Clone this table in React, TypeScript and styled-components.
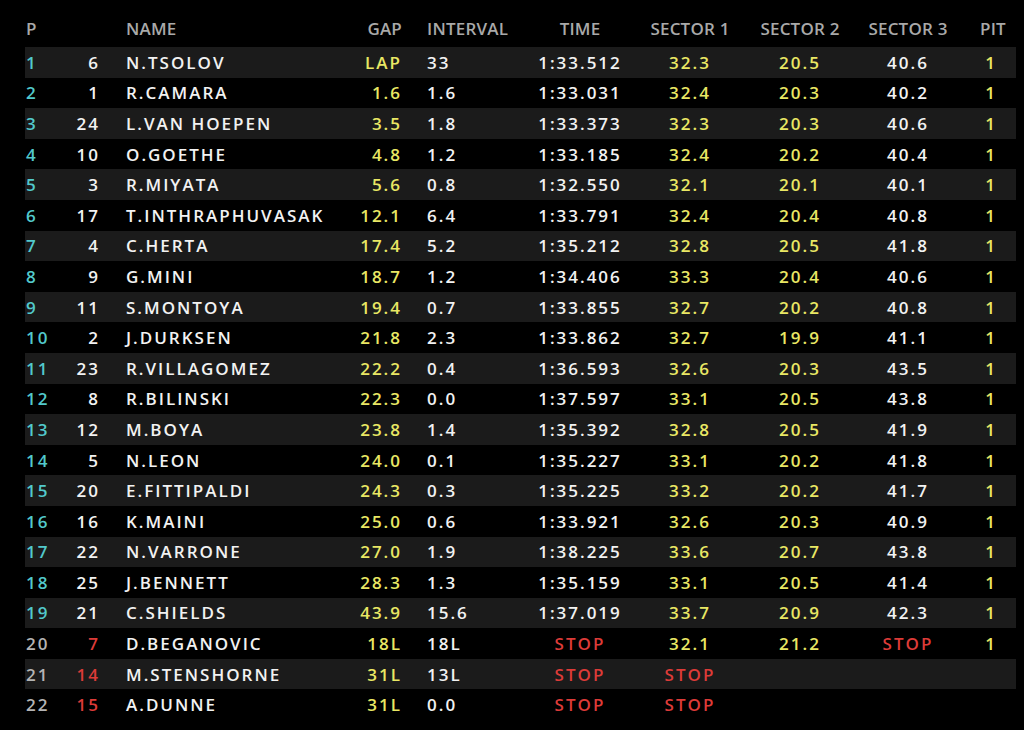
import React from "react";
import styled, { createGlobalStyle } from "styled-components";

const GlobalStyle = createGlobalStyle`
  html, body { margin: 0; padding: 0; background: #000; }
  body { font-family: "Open Sans", "Noto Sans", sans-serif; }
`;

const COLS = "40px 35px 240px 62px 118px 120px 100px 120px 96px 60px";

const Board = styled.div`
  width: 1024px;
  height: 730px;
  background: #000;
  padding: 13px 8px 0 25px;
  box-sizing: border-box;
  overflow: hidden;
`;

const HeaderRow = styled.div`
  display: grid;
  grid-template-columns: ${COLS};
  width: 991px;
  height: 31px;
  align-items: center;
  margin-bottom: 3px;
  color: #a9a9a9;
  font-size: 17px;
  font-weight: 600;
  letter-spacing: 0.2px;
`;

const Row = styled.div<{ $band: boolean }>`
  display: grid;
  grid-template-columns: ${COLS};
  width: 991px;
  height: 30.6px;
  align-items: center;
  background: ${(p) => (p.$band ? "#1b1b1b" : "#000")};
  font-size: 17px;
  font-weight: 600;
  letter-spacing: 2px;
  line-height: 1;
`;

type Align = "left" | "right" | "center";

const Cell = styled.div<{ $align: Align; $pl?: number; $color?: string }>`
  text-align: ${(p) => p.$align};
  padding-left: ${(p) => p.$pl ?? 0}px;
  color: ${(p) => p.$color ?? "#f2f2f2"};
  white-space: nowrap;
`;

const HCell = styled.div<{ $align: Align; $pl?: number }>`
  text-align: ${(p) => p.$align};
  padding-left: ${(p) => p.$pl ?? 0}px;
  white-space: nowrap;
`;

const CYAN = "#52c9cc";
const YELLOW = "#e9e764";
const RED = "#dd3b38";
const WHITE = "#f2f2f2";
const GRAY = "#b4b4b4";

type Driver = {
  no: string;
  name: string;
  gap: string;
  interval: string;
  time: string;
  s1: string;
  s2: string;
  s3: string;
  pit: string;
  out?: boolean;
};

const drivers: Driver[] = [
  { no: "6", name: "N.TSOLOV", gap: "LAP", interval: "33", time: "1:33.512", s1: "32.3", s2: "20.5", s3: "40.6", pit: "1" },
  { no: "1", name: "R.CAMARA", gap: "1.6", interval: "1.6", time: "1:33.031", s1: "32.4", s2: "20.3", s3: "40.2", pit: "1" },
  { no: "24", name: "L.VAN HOEPEN", gap: "3.5", interval: "1.8", time: "1:33.373", s1: "32.3", s2: "20.3", s3: "40.6", pit: "1" },
  { no: "10", name: "O.GOETHE", gap: "4.8", interval: "1.2", time: "1:33.185", s1: "32.4", s2: "20.2", s3: "40.4", pit: "1" },
  { no: "3", name: "R.MIYATA", gap: "5.6", interval: "0.8", time: "1:32.550", s1: "32.1", s2: "20.1", s3: "40.1", pit: "1" },
  { no: "17", name: "T.INTHRAPHUVASAK", gap: "12.1", interval: "6.4", time: "1:33.791", s1: "32.4", s2: "20.4", s3: "40.8", pit: "1" },
  { no: "4", name: "C.HERTA", gap: "17.4", interval: "5.2", time: "1:35.212", s1: "32.8", s2: "20.5", s3: "41.8", pit: "1" },
  { no: "9", name: "G.MINI", gap: "18.7", interval: "1.2", time: "1:34.406", s1: "33.3", s2: "20.4", s3: "40.6", pit: "1" },
  { no: "11", name: "S.MONTOYA", gap: "19.4", interval: "0.7", time: "1:33.855", s1: "32.7", s2: "20.2", s3: "40.8", pit: "1" },
  { no: "2", name: "J.DURKSEN", gap: "21.8", interval: "2.3", time: "1:33.862", s1: "32.7", s2: "19.9", s3: "41.1", pit: "1" },
  { no: "23", name: "R.VILLAGOMEZ", gap: "22.2", interval: "0.4", time: "1:36.593", s1: "32.6", s2: "20.3", s3: "43.5", pit: "1" },
  { no: "8", name: "R.BILINSKI", gap: "22.3", interval: "0.0", time: "1:37.597", s1: "33.1", s2: "20.5", s3: "43.8", pit: "1" },
  { no: "12", name: "M.BOYA", gap: "23.8", interval: "1.4", time: "1:35.392", s1: "32.8", s2: "20.5", s3: "41.9", pit: "1" },
  { no: "5", name: "N.LEON", gap: "24.0", interval: "0.1", time: "1:35.227", s1: "33.1", s2: "20.2", s3: "41.8", pit: "1" },
  { no: "20", name: "E.FITTIPALDI", gap: "24.3", interval: "0.3", time: "1:35.225", s1: "33.2", s2: "20.2", s3: "41.7", pit: "1" },
  { no: "16", name: "K.MAINI", gap: "25.0", interval: "0.6", time: "1:33.921", s1: "32.6", s2: "20.3", s3: "40.9", pit: "1" },
  { no: "22", name: "N.VARRONE", gap: "27.0", interval: "1.9", time: "1:38.225", s1: "33.6", s2: "20.7", s3: "43.8", pit: "1" },
  { no: "25", name: "J.BENNETT", gap: "28.3", interval: "1.3", time: "1:35.159", s1: "33.1", s2: "20.5", s3: "41.4", pit: "1" },
  { no: "21", name: "C.SHIELDS", gap: "43.9", interval: "15.6", time: "1:37.019", s1: "33.7", s2: "20.9", s3: "42.3", pit: "1" },
  { no: "7", name: "D.BEGANOVIC", gap: "18L", interval: "18L", time: "STOP", s1: "32.1", s2: "21.2", s3: "STOP", pit: "1", out: true },
  { no: "14", name: "M.STENSHORNE", gap: "31L", interval: "13L", time: "STOP", s1: "STOP", s2: "", s3: "", pit: "", out: true },
  { no: "15", name: "A.DUNNE", gap: "31L", interval: "0.0", time: "STOP", s1: "STOP", s2: "", s3: "", pit: "", out: true },
];

const tone = (v: string, base: string) => (v === "STOP" ? RED : base);

export default function App() {
  return (
    <>
      <GlobalStyle />
      <Board>
        <HeaderRow>
          <HCell $align="left" $pl={1}>P</HCell>
          <HCell $align="right" />
          <HCell $align="left" $pl={26}>NAME</HCell>
          <HCell $align="right">GAP</HCell>
          <HCell $align="left" $pl={25}>INTERVAL</HCell>
          <HCell $align="center">TIME</HCell>
          <HCell $align="center">SECTOR 1</HCell>
          <HCell $align="center">SECTOR 2</HCell>
          <HCell $align="center">SECTOR 3</HCell>
          <HCell $align="center" $pl={14}>PIT</HCell>
        </HeaderRow>
        {drivers.map((d, i) => (
          <Row key={d.name} $band={i % 2 === 0}>
            <Cell $align="left" $pl={1} $color={d.out ? GRAY : CYAN}>{i + 1}</Cell>
            <Cell $align="right" $color={d.out ? RED : WHITE}>{d.no}</Cell>
            <Cell $align="left" $pl={26}>{d.name}</Cell>
            <Cell $align="right" $color={YELLOW}>{d.gap}</Cell>
            <Cell $align="left" $pl={25}>{d.interval}</Cell>
            <Cell $align="center" $color={tone(d.time, WHITE)}>{d.time}</Cell>
            <Cell $align="center" $color={tone(d.s1, YELLOW)}>{d.s1}</Cell>
            <Cell $align="center" $color={tone(d.s2, YELLOW)}>{d.s2}</Cell>
            <Cell $align="center" $color={tone(d.s3, WHITE)}>{d.s3}</Cell>
            <Cell $align="center" $pl={10} $color={YELLOW}>{d.pit}</Cell>
          </Row>
        ))}
      </Board>
    </>
  );
}
